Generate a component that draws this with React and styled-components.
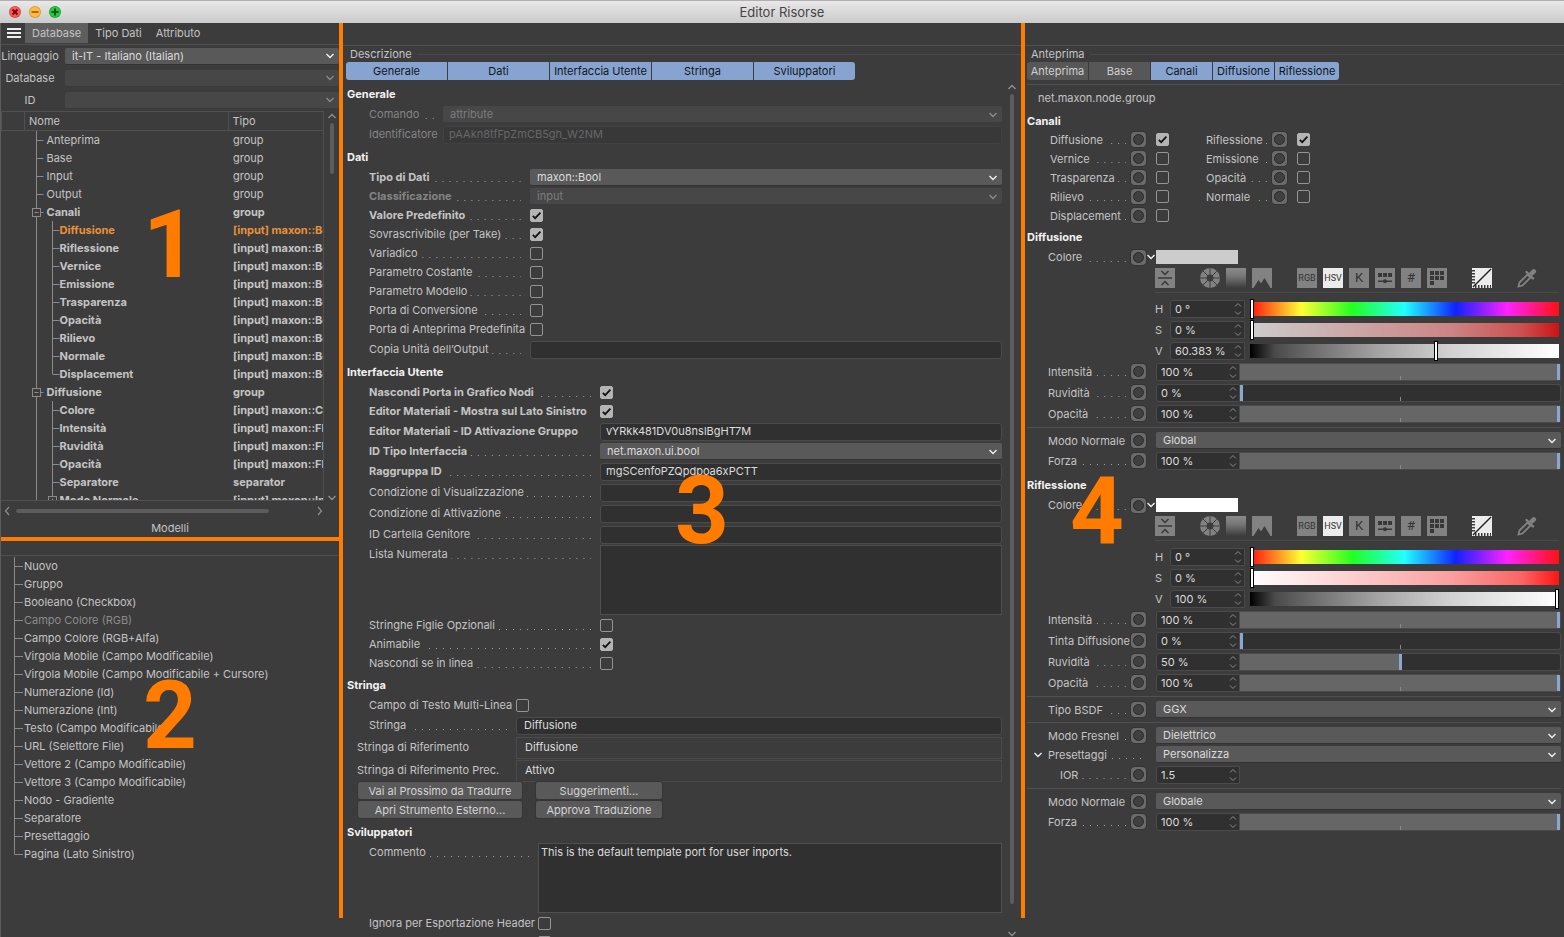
import React, { useId } from 'react'
import styled, { createGlobalStyle } from 'styled-components'

const orange = '#ff7c00'
const line = '#505050'

const GlobalStyle = createGlobalStyle`
  * {
    box-sizing: border-box;
  }
  body {
    margin: 0;
    background: #3c3c3c;
    color: #c4c4c4;
    font: 11px/14px Inter, 'Liberation Sans', sans-serif;
  }
  button, input, select, textarea {
    margin: 0;
    padding: 0;
    border: 0;
    color: inherit;
    font: inherit;
  }
`

const Window = styled.div`
  display: flex;
  flex-direction: column;
  height: 100vh;
  overflow: hidden;
`

const TitleBar = styled.header`
  display: grid;
  grid-template-columns: 1fr auto 1fr;
  align-items: center;
  height: 23px;
  flex: none;
  padding: 0 9px;
  border-top: 1px solid #b4aeb2;
  background: linear-gradient(#e8e8e8, #cbcbcb);
  color: #444;
`

const WindowTitle = styled.h1`
  margin: 0;
  font-size: 13px;
  line-height: 20px;
  font-weight: 400;
`

const Lights = styled.div`
  display: flex;
  gap: 8px;
`

const Light = styled.button`
  display: block;
  width: 12px;
  height: 12px;
  border-radius: 50%;
  background: ${(p) => p.$color};
  box-shadow: inset 0 0 0 1px rgba(0, 0, 0, 0.15);

  svg {
    display: block;
  }
`

const Columns = styled.main`
  display: grid;
  grid-template-columns: minmax(0, 343fr) minmax(0, 682fr) minmax(0, 539fr);
  flex: 1;
  min-height: 0;
`

const Panel = styled.section`
  position: relative;
  display: flex;
  flex-direction: column;
  min-width: 0;
  min-height: 0;
  overflow: hidden;
`

const SidePanel = styled(Panel)`
  border-left: 1px solid #5c5c5c;
  padding-right: 4px;
`

// annotation marks laid over the editor
const Divider = styled.div`
  position: absolute;
  top: 0;
  right: 0;
  bottom: 19px;
  width: 4px;
  background: ${orange};
`

const Marker = styled.div`
  position: absolute;
  left: ${(p) => p.$x}px;
  top: ${(p) => p.$y}px;
  color: ${orange};
  font: bold 94px/72px Roboto, Arial, sans-serif;
  pointer-events: none;
`

const MenuBar = styled.nav`
  display: flex;
  align-items: stretch;
  flex: none;
  height: 22px;
  padding: 0 0 1px 4px;
  border-bottom: 1px solid ${line};
`

const MenuItem = styled.button`
  padding: 0 7px;
  background: ${(p) => (p.$active ? '#5e5e5e' : 'transparent')};
`

const Burger = styled.button`
  width: 20px;
  background: none;

  svg {
    display: block;
  }
`

const Overlap = styled.div`
  display: grid;
  flex: 1;
  align-items: center;
  min-width: 0;

  > * {
    grid-area: 1 / 1;
  }
  > svg {
    justify-self: end;
    margin-right: 4px;
    pointer-events: none;
  }
`

const SelectBox = styled.select`
  width: 100%;
  height: 17px;
  padding-left: 7px;
  appearance: none;
  border-bottom: 1px solid #333;
  border-radius: 2px;
  background: #595959;
  color: #dcdcdc;
  opacity: 1;

  &:disabled {
    border-color: #3c3c3c;
    background: #474747;
    color: #7c7c7c;
  }
`

const Chevron = ({ color = '#f0f0f0', up }) => (
  <svg width="10" height="6" viewBox="0 0 10 6" fill="none" stroke={color} strokeWidth="1.4">
    <path d={up ? 'M1.5 5 5 1.5 8.5 5' : 'M1.5 1 5 4.5 8.5 1'} />
  </svg>
)

const Select = ({ id, value, disabled, label }) => (
  <Overlap>
    <SelectBox id={id} disabled={disabled} aria-label={label}>
      <option>{value}</option>
    </SelectBox>
    <Chevron color={disabled ? '#8a8a8a' : '#f0f0f0'} />
  </Overlap>
)

const TextBox = styled.input`
  flex: 1;
  min-width: 0;
  height: 18px;
  padding: 0 0 1px ${(p) => p.$pad || 5}px;
  border: 1px solid #4b4b4b;
  border-radius: 3px;
  background: #303030;
  color: #dcdcdc;

  &:disabled {
    border-color: #414141;
    background: #383838;
    color: #676767;
  }
`

const ReadOnly = styled(TextBox)`
  height: 22px;
  border-radius: 0;
  background: transparent;
`

const Area = styled.textarea`
  flex: 1;
  height: 70px;
  padding: 1px 2px;
  border: 1px solid #4f4f4f;
  background: #303030;
  color: #dcdcdc;
  resize: none;
`

const tick = `url("data:image/svg+xml,%3Csvg xmlns='http://www.w3.org/2000/svg' viewBox='0 0 13 13'%3E%3Cpath d='M2.8 6.8 5.2 9.2 10.4 3.6' fill='none' stroke='%23111' stroke-width='1.7'/%3E%3C/svg%3E")`

const Check = styled.input.attrs({ type: 'checkbox' })`
  flex: none;
  width: 13px;
  height: 13px;
  appearance: none;
  border: 1px solid #949494;
  border-radius: 2px;

  &:checked {
    border-color: #b4b4b4;
    background: #b4b4b4 ${tick} center / 13px 13px;
  }
`

const PushButton = styled.button`
  height: 17px;
  border-radius: 2px;
  background: #595959;
  box-shadow: 0 0 0 1px #353535;
  color: #d4d4d4;
`

/* left panel */

const FilterRow = styled.div`
  display: flex;
  align-items: center;
  flex: none;
  height: 22px;
`

const FilterLabel = styled.label`
  width: 58px;
  margin-right: 6px;
  text-align: center;
`

const TreeFrame = styled.div`
  display: flex;
  flex: none;
  height: 390px;
`

const TreeClip = styled.div`
  flex: 1;
  min-width: 0;
  overflow: hidden;
  border: solid ${line};
  border-width: 1px 1px 1px 0;
`

const TreeTable = styled.table`
  width: 100%;
  table-layout: fixed;
  border-collapse: collapse;

  th {
    height: 18px;
    padding: 0 0 0 4px;
    border-bottom: 1px solid ${line};
    border-left: 1px solid ${line};
    font-weight: 400;
    text-align: left;
  }
  td {
    height: 18px;
    padding: 0;
    overflow: hidden;
    white-space: nowrap;
  }
  td:last-child {
    padding-left: 5px;
  }
`

const TreeRow = styled.tr`
  font-weight: ${(p) => (p.$bold ? 700 : 400)};
  color: ${(p) => (p.$active ? '#e8913a' : 'inherit')};
`

const NodeName = styled.div`
  display: flex;
  align-items: center;
  height: 18px;

  svg {
    flex: none;
  }
`

const ScrollColumn = styled.div`
  display: flex;
  flex-direction: column;
  align-items: center;
  justify-content: space-between;
  flex: none;
  gap: 4px;
  width: ${(p) => p.$width}px;
  padding-top: ${(p) => p.$pad}px;
`

const ScrollRow = styled.div`
  display: flex;
  align-items: center;
  flex: none;
  gap: 6px;
  height: 18px;
  padding: 2px 16px 0 3px;
`

const Thumb = styled.div`
  width: 4px;
  height: ${(p) => p.$size};
  margin-bottom: auto;
  border-radius: 2px;
  background: #5c5c5c;
`

const HorizontalThumb = styled.div`
  flex: 1;
  height: 4px;
  margin-right: 42px;
  border-radius: 2px;
  background: #5c5c5c;
`

const ModelsTitle = styled.h2`
  margin: 0;
  padding: 1px 0;
  font-size: 11px;
  line-height: 16px;
  font-weight: 400;
  text-align: center;
`

const HorizontalDivider = styled.div`
  flex: none;
  height: 4px;
  background: ${orange};
`

const ModelList = styled.ul`
  flex: 1;
  margin: 14px 0 0;
  padding: 1px 0 0 11px;
  border-top: 1px solid ${line};
  list-style: none;
`

const ModelItem = styled.li`
  display: flex;
  align-items: center;
  height: 18px;
  color: ${(p) => (p.$dim ? '#8b8b8b' : 'inherit')};
`

/* middle and right panels */

const EmptyBar = styled.div`
  flex: none;
  height: 23px;
  border-bottom: 1px solid ${line};
`

const GroupTitle = styled.div`
  display: flex;
  align-items: center;
  flex: none;
  gap: 5px;
  height: 16px;
  padding-left: ${(p) => p.$indent}px;

  &::after {
    content: '';
    flex: 1;
    height: 1px;
    background: #4a4a4a;
  }
`

const Tabs = styled.div`
  display: flex;
  flex: none;
  gap: 1px;
  height: 18px;
  padding-left: ${(p) => p.$indent}px;
`

const Tab = styled.button`
  width: ${(p) => p.$width}px;
  background: ${(p) => (p.$on ? '#86a4cf' : '#575757')};
  color: ${(p) => (p.$on ? '#10141c' : '#cfcfcf')};
  white-space: nowrap;

  &:first-child {
    border-radius: 3px 0 0 3px;
  }
  &:last-child {
    border-radius: 0 3px 3px 0;
  }
`

const ScrollArea = styled.div`
  display: flex;
  flex: 1;
  min-height: 0;
  padding: 0 4px;
`

const Form = styled.form`
  flex: 1;
  min-width: 0;
  padding-top: 4px;
`

const SectionTitle = styled.h2`
  margin: 0;
  color: #f2f2f2;
  font-size: 11px;
  line-height: 21px;
  font-weight: 700;
`

const Section = styled.div`
  margin-bottom: 2px;
`

const heights = { check: 19, select: 19, input: 21, area: 71, read: 23 }

const FieldRow = styled.div`
  display: flex;
  align-items: ${(p) => (p.$kind === 'area' ? 'flex-start' : 'center')};
  height: ${(p) => heights[p.$kind]}px;
`

const FieldLabel = styled.label`
  display: flex;
  align-items: center;
  flex: none;
  width: ${(p) => p.$width}px;
  padding-left: ${(p) => p.$indent}px;
  line-height: 19px;
  color: ${(p) => (p.$dim ? '#848484' : 'inherit')};
  font-weight: ${(p) => (p.$bold ? 700 : 400)};
  white-space: nowrap;
`

const Leader = styled.span`
  flex: 1;
  height: 1px;
  margin: 8px 9px 0 3px;
  background: linear-gradient(270deg, #a2a2a2 1px, transparent 1px) right / 7px 1px repeat-x;
`

const ButtonGrid = styled.div`
  display: grid;
  grid-template-columns: 164px 126px;
  grid-auto-rows: 17px;
  gap: 2px 14px;
  margin-left: 11px;
  padding-bottom: 2px;
`

const Field = ({ kind, label, value, on, bold, dim, width, indent = 22, dots = true, pad }) => {
  const id = useId()
  return (
    <FieldRow $kind={kind}>
      <FieldLabel htmlFor={id} $width={width} $indent={indent} $bold={bold} $dim={dim}>
        {label}
        {dots && <Leader />}
      </FieldLabel>
      {kind === 'check' && <Check id={id} defaultChecked={on} />}
      {kind === 'select' && <Select id={id} value={value} disabled={dim} />}
      {kind === 'input' && <TextBox id={id} defaultValue={value} disabled={dim} $pad={pad} />}
      {kind === 'read' && <ReadOnly id={id} value={value} readOnly $pad={8} />}
      {kind === 'area' && <Area id={id} defaultValue={value} />}
    </FieldRow>
  )
}

const description = [
  {
    title: 'Generale',
    width: 96,
    fields: [
      { kind: 'select', label: 'Comando', value: 'attribute', dim: true },
      { kind: 'input', label: 'Identificatore', value: 'pAAkn8tfFpZmCB5gh_W2NM', dim: true, dots: false },
    ],
  },
  {
    title: 'Dati',
    width: 183,
    fields: [
      { kind: 'select', label: 'Tipo di Dati', value: 'maxon::Bool', bold: true },
      { kind: 'select', label: 'Classificazione', value: 'input', bold: true, dim: true },
      { kind: 'check', label: 'Valore Predefinito', on: true, bold: true },
      { kind: 'check', label: 'Sovrascrivibile (per Take)', on: true },
      { kind: 'check', label: 'Variadico' },
      { kind: 'check', label: 'Parametro Costante' },
      { kind: 'check', label: 'Parametro Modello' },
      { kind: 'check', label: 'Porta di Conversione' },
      { kind: 'check', label: 'Porta di Anteprima Predefinita', dots: false },
      { kind: 'input', label: 'Copia Unità dell’Output', value: '' },
    ],
  },
  {
    title: 'Interfaccia Utente',
    width: 253,
    fields: [
      { kind: 'check', label: 'Nascondi Porta in Grafico Nodi', on: true, bold: true },
      { kind: 'check', label: 'Editor Materiali - Mostra sul Lato Sinistro', on: true, bold: true, dots: false },
      { kind: 'input', label: 'Editor Materiali - ID Attivazione Gruppo', value: 'vYRkk481DV0u8nslBgHT7M', bold: true, dots: false },
      { kind: 'select', label: 'ID Tipo Interfaccia', value: 'net.maxon.ui.bool', bold: true },
      { kind: 'input', label: 'Raggruppa ID', value: 'mgSCenfoPZQpdpoa6xPCTT', bold: true },
      { kind: 'input', label: 'Condizione di Visualizzazione', value: '' },
      { kind: 'input', label: 'Condizione di Attivazione', value: '' },
      { kind: 'input', label: 'ID Cartella Genitore', value: '' },
      { kind: 'area', label: 'Lista Numerata', value: '' },
      { kind: 'check', label: 'Stringhe Figlie Opzionali' },
      { kind: 'check', label: 'Animabile', on: true },
      { kind: 'check', label: 'Nascondi se in linea' },
    ],
  },
  {
    title: 'Stringa',
    width: 169,
    fields: [
      { kind: 'check', label: 'Campo di Testo Multi-Linea', dots: false },
      { kind: 'input', label: 'Stringa', value: 'Diffusione', pad: 7 },
      { kind: 'read', label: 'Stringa di Riferimento', value: 'Diffusione', indent: 10, dots: false },
      { kind: 'read', label: 'Stringa di Riferimento Prec.', value: 'Attivo', indent: 10, dots: false },
    ],
    buttons: ['Vai al Prossimo da Tradurre', 'Suggerimenti...', 'Apri Strumento Esterno...', 'Approva Traduzione'],
  },
  {
    title: 'Sviluppatori',
    width: 191,
    fields: [
      { kind: 'area', label: 'Commento', value: 'This is the default template port for user inports.' },
      { kind: 'check', label: 'Ignora per Esportazione Header', dots: false },
      { kind: 'check', label: '' },
    ],
  },
]

const child = (name, type) => ({ name, type: `[input] maxon::${type}`, level: 2, bold: true })

const tree = [
  { name: 'Anteprima', type: 'group', level: 1 },
  { name: 'Base', type: 'group', level: 1 },
  { name: 'Input', type: 'group', level: 1 },
  { name: 'Output', type: 'group', level: 1 },
  { name: 'Canali', type: 'group', level: 1, bold: true, box: '-' },
  { ...child('Diffusione', 'Bool'), active: true },
  child('Riflessione', 'Bool'),
  child('Vernice', 'Bool'),
  child('Emissione', 'Bool'),
  child('Trasparenza', 'Bool'),
  child('Opacità', 'Bool'),
  child('Rilievo', 'Bool'),
  child('Normale', 'Bool'),
  { ...child('Displacement', 'Bool'), last: true },
  { name: 'Diffusione', type: 'group', level: 1, bold: true, box: '-' },
  child('Colore', 'Color'),
  child('Intensità', 'Float'),
  child('Ruvidità', 'Float'),
  child('Opacità', 'Float'),
  { name: 'Separatore', type: 'separator', level: 2, bold: true },
  { ...child('Modo Normale', 'Int'), box: '+' },
]

const models = [
  'Nuovo',
  'Gruppo',
  'Booleano (Checkbox)',
  'Campo Colore (RGB)',
  'Campo Colore (RGB+Alfa)',
  'Virgola Mobile (Campo Modificabile)',
  'Virgola Mobile (Campo Modificabile + Cursore)',
  'Numerazione (Id)',
  'Numerazione (Int)',
  'Testo (Campo Modificabile)',
  'URL (Selettore File)',
  'Vettore 2 (Campo Modificabile)',
  'Vettore 3 (Campo Modificabile)',
  'Nodo - Gradiente',
  'Separatore',
  'Presettaggio',
  'Pagina (Lato Sinistro)',
]

const Guides = ({ level, box, last }) => {
  const x = level === 1 ? 11.5 : 27.5
  const width = level === 1 ? 22 : 35
  return (
    <svg width={width} height="18" fill="none" stroke="#8a8a8a">
      <path d="M11.5 0V18" />
      {level === 2 && <path d={last ? 'M27.5 0V9' : 'M27.5 0V18'} />}
      <path d={`M${x} 9.5H${x + 7}`} />
      {box && (
        <>
          <rect x={x - 4} y="5.5" width="8" height="8" fill="#3c3c3c" />
          <path d={`M${x - 2} 9.5h4`} />
          {box === '+' && <path d={`M${x} 7.5v4`} />}
        </>
      )}
    </svg>
  )
}

const Filter = ({ label, value, disabled }) => {
  const id = useId()
  return (
    <FilterRow>
      <FilterLabel htmlFor={id}>{label}</FilterLabel>
      <Select id={id} value={value} disabled={disabled} />
    </FilterRow>
  )
}

const Side = ({ left }) => (
  <svg width="6" height="10" viewBox="0 0 6 10" fill="none" stroke="#8f8f8f" strokeWidth="1.2">
    <path d={left ? 'M5 1 1.5 5 5 9' : 'M1 1 4.5 5 1 9'} />
  </svg>
)

const DatabasePanel = () => (
  <SidePanel>
    <MenuBar>
      <Burger aria-label="Menu">
        <svg width="20" height="11" fill="#f0f0f0">
          <path d="M2 0h14v2H2zM2 4h14v2H2zM2 8h14v2H2z" />
        </svg>
      </Burger>
      <MenuItem $active>Database</MenuItem>
      <MenuItem>Tipo Dati</MenuItem>
      <MenuItem>Attributo</MenuItem>
    </MenuBar>
    <Filter label="Linguaggio" value="it-IT - Italiano (Italian)" />
    <Filter label="Database" value="" disabled />
    <Filter label="ID" value="" disabled />
    <TreeFrame>
      <TreeClip>
        <TreeTable>
          <colgroup>
            <col style={{ width: 23 }} />
            <col />
            <col style={{ width: 95 }} />
          </colgroup>
          <thead>
            <tr>
              <th aria-label="Stato" />
              <th>Nome</th>
              <th>Tipo</th>
            </tr>
          </thead>
          <tbody>
            {tree.map((node, i) => (
              <TreeRow key={i} $bold={node.bold} $active={node.active}>
                <td />
                <td>
                  <NodeName>
                    <Guides {...node} />
                    {node.name}
                  </NodeName>
                </td>
                <td>{node.type}</td>
              </TreeRow>
            ))}
          </tbody>
        </TreeTable>
      </TreeClip>
      <ScrollColumn $width={15} $pad={2}>
        <Chevron color="#8f8f8f" up />
        <Thumb $size="51px" />
        <Chevron color="#8f8f8f" />
      </ScrollColumn>
    </TreeFrame>
    <ScrollRow>
      <Side left />
      <HorizontalThumb />
      <Side />
    </ScrollRow>
    <ModelsTitle>Modelli</ModelsTitle>
    <HorizontalDivider />
    <ModelList>
      {models.map((name, i) => (
        <ModelItem key={name} $dim={i === 3}>
          <svg width="12" height="18" fill="none" stroke="#8a8a8a">
            <path d={i === models.length - 1 ? 'M2.5 0V9.5H11' : 'M2.5 0V18M2.5 9.5H11'} />
          </svg>
          {name}
        </ModelItem>
      ))}
    </ModelList>
    <Marker $x={142} $y={186}>1</Marker>
    <Marker $x={142} $y={657}>2</Marker>
    <Divider />
  </SidePanel>
)

const DescriptionPanel = () => (
  <Panel>
    <EmptyBar />
    <GroupTitle $indent={7}>Descrizione</GroupTitle>
    <Tabs $indent={3}>
      {['Generale', 'Dati', 'Interfaccia Utente', 'Stringa', 'Sviluppatori'].map((name) => (
        <Tab key={name} $on $width={101}>{name}</Tab>
      ))}
    </Tabs>
    <ScrollArea>
      <Form>
        {description.map(({ title, width, fields, buttons }) => (
          <Section key={title}>
            <SectionTitle>{title}</SectionTitle>
            {fields.map((field) => (
              <Field key={field.label} width={width} {...field} />
            ))}
            {buttons && (
              <ButtonGrid>
                {buttons.map((name) => (
                  <PushButton key={name} type="button">{name}</PushButton>
                ))}
              </ButtonGrid>
            )}
          </Section>
        ))}
      </Form>
      <ScrollColumn $width={19} $pad={4}>
        <Chevron color="#8f8f8f" up />
        <Thumb $size="95%" />
        <Chevron color="#8f8f8f" />
      </ScrollColumn>
    </ScrollArea>
    <Marker $x={332} $y={452}>3</Marker>
    <Divider />
  </Panel>
)

const Attributes = styled.form`
  padding: 0 3px 0 2px;
`

const NodeId = styled.p`
  margin: 4px 0 0;
  padding: 5px 0 6px 11px;
  border-top: 1px solid ${line};
  line-height: 16px;
`

const AttributeTitle = styled(SectionTitle)`
  margin-top: ${(p) => p.$gap || 0}px;
  line-height: 18px;
`

const ChannelGrid = styled.div`
  display: grid;
  grid-template-columns: 119px 104px;
  grid-auto-rows: 19px;
  column-gap: 37px;
  margin-left: 23px;
`

const Channel = styled.div`
  display: flex;
  align-items: center;
`

const ChannelLabel = styled.label`
  display: flex;
  align-items: center;
  flex: 1;
  white-space: nowrap;
`

const attributeHeights = { colour: 22, slider: 21, number: 21, select: 19 }

const AttributeRow = styled.div`
  display: grid;
  grid-template-columns: 21px 83px 15px 10px minmax(0, 1fr);
  align-items: center;
  height: ${(p) => attributeHeights[p.$kind]}px;
`

const AttributeLabel = styled.label`
  display: flex;
  align-items: center;
  grid-column: ${(p) => (p.$wide ? '2 / 4' : '2')};
  padding-left: ${(p) => (p.$nested ? 12 : 0)}px;
  white-space: nowrap;
`

const ShortLeader = styled(Leader)`
  margin: 8px 5px 0 3px;
`

const Caret = styled.button`
  justify-self: center;
  background: none;

  svg {
    display: block;
  }
`

const Rule = styled.hr`
  height: 1px;
  margin: 3px 0;
  border: 0;
  background: ${line};
`

const Swatch = styled.input.attrs({ type: 'color' })`
  display: block;
  width: 82px;
  height: 14px;
  appearance: none;
  background: none;

  &::-webkit-color-swatch-wrapper {
    padding: 0;
  }
  &::-webkit-color-swatch {
    border: 0;
    border-radius: 0;
  }
`

const NumberBox = styled.div`
  display: flex;
  align-items: center;
  flex: none;
  width: ${(p) => p.$width}px;
  height: 18px;
  padding: 0 2px 0 4px;
  border: 1px solid #4b4b4b;
  border-radius: 3px 0 0 3px;
  background: #303030;
  color: #dcdcdc;

  input {
    flex: 1;
    min-width: 0;
    background: none;
  }
`

const SliderLine = styled.div`
  display: flex;
`

const Slider = styled.input.attrs({ type: 'range' })`
  flex: 1;
  min-width: 0;
  height: 18px;
  appearance: none;
  border: 1px solid #4b4b4b;
  border-left: 0;
  border-radius: 0 3px 3px 0;
  background:
    linear-gradient(#8a8a8a, #8a8a8a) center bottom / 1px 4px no-repeat,
    linear-gradient(90deg, #666 ${(p) => p.defaultValue}%, #303030 ${(p) => p.defaultValue}%);

  &::-webkit-slider-thumb {
    width: 3px;
    height: 16px;
    appearance: none;
    background: #8ba7d1;
  }
`

const hue = '#f11, #ff3 16.6%, #2f2 33.3%, #2ff 50%, #12f 66.6%, #f2f 83.3%, #f11'
const value = '#000, #4a4a4a 8%, #6d6d6d 20%, #a5a5a5 42%, #d2d2d2 65%, #fff'

const ColourBar = styled.input.attrs({ type: 'range' })`
  flex: 1;
  min-width: 0;
  height: 14px;
  margin: 0 2px 0 5px;
  appearance: none;
  background: linear-gradient(90deg, ${(p) => p.$stops});

  &::-webkit-slider-thumb {
    width: 4px;
    height: 20px;
    appearance: none;
    border: 1px solid #000;
    background: #fff;
  }
`

const ColourRow = styled.div`
  display: flex;
  align-items: center;
  height: 21px;
  margin-left: 128px;

  label {
    width: 15px;
  }
`

const IconBar = styled.div`
  display: flex;
  height: 25px;
  margin: 0 2px 5px 128px;
  border-bottom: 1px solid #4a4a4a;
`

const IconGroup = styled.div`
  display: flex;
  gap: 6px;
  margin-right: 25px;
`

const IconButton = styled.button`
  display: grid;
  place-items: center;
  flex: none;
  width: 20px;
  height: 20px;
  background: ${(p) => (p.$bare ? 'none' : p.$on ? '#ececec' : '#828282')};
  color: ${(p) => (p.$bare ? '#828282' : '#333')};
  font: ${(p) => (p.$word ? 9 : 13)}px/20px Roboto, 'Liberation Sans', sans-serif;

  svg {
    display: block;
  }
`

const Socket = styled.button`
  display: grid;
  place-items: center;
  flex: none;
  width: 15px;
  height: 15px;
  border-radius: 4px;
  background: #6a6a6a;
  box-shadow: 0 0 0 1px #343434;

  &::after {
    content: '';
    width: 9px;
    height: 9px;
    border: 1px solid #2a2a2a;
    border-radius: 50%;
    background: #404040;
  }
`

const ChannelSocket = styled(Socket)`
  margin-right: 10px;
`

const Spinner = () => (
  <svg width="8" height="14" viewBox="0 0 8 14" fill="none" stroke="#8a8a8a">
    <path d="M1 4.5 4 1.5 7 4.5M1 9.5 4 12.5 7 9.5" />
  </svg>
)

const NumberField = ({ id, text, width }) => (
  <NumberBox $width={width}>
    <input id={id} defaultValue={text} />
    <Spinner />
  </NumberBox>
)

const Attribute = ({ kind, label, text, amount, nested, open, colour }) => {
  const id = useId()
  return (
    <AttributeRow $kind={kind}>
      {open ? <Caret type="button" aria-label="Apri"><Chevron /></Caret> : <span />}
      <AttributeLabel htmlFor={id} $nested={nested} $wide={open}>
        {label}
        <ShortLeader />
      </AttributeLabel>
      {!open && <Socket type="button" aria-label={`Porta ${label}`} />}
      {kind === 'colour' ? <Caret type="button" aria-label="Espandi"><Chevron /></Caret> : <span />}
      {kind === 'colour' && <Swatch id={id} defaultValue={colour} />}
      {kind === 'select' && <Select id={id} value={text} />}
      {kind === 'number' && <NumberField id={id} text={text} width={84} />}
      {kind === 'slider' && (
        <SliderLine>
          <NumberField id={id} text={text} width={84} />
          <Slider aria-label={label} defaultValue={amount} />
        </SliderLine>
      )}
    </AttributeRow>
  )
}

const ColourTools = () => (
  <IconBar>
    <IconGroup>
      <IconButton type="button" aria-label="Comprimi">
        <svg width="20" height="20" fill="none" stroke="#383838" strokeWidth="1.5">
          <path d="M3 10H17M6.5 3 10 6.5 13.5 3M6.5 17 10 13.5 13.5 17" />
        </svg>
      </IconButton>
    </IconGroup>
    <IconGroup>
      <IconButton type="button" aria-label="Ruota colore" $bare>
        <svg width="20" height="20">
          <circle cx="10" cy="10" r="10" fill="#828282" />
          <path d="M10 0V20M0 10H20M3 3 17 17M17 3 3 17" stroke="#3c3c3c" strokeWidth="1" />
          <circle cx="10" cy="10" r="3.4" fill="#3c3c3c" />
        </svg>
      </IconButton>
      <IconButton type="button" aria-label="Spettro" $bare>
        <svg width="20" height="20">
          <defs>
            <linearGradient id="spectrum" x2="0" y2="1">
              <stop stopColor="#8a8a8a" />
              <stop offset="0.4" stopColor="#777" />
              <stop offset="1" stopColor="#3c3c3c" />
            </linearGradient>
          </defs>
          <path d="M0 0H20V20H0z" fill="url(#spectrum)" />
        </svg>
      </IconButton>
      <IconButton type="button" aria-label="Immagine" $bare>
        <svg width="20" height="20">
          <path d="M0 0H20V20H18L12.500 10 9 15.500 6.500 12 1.500 20H0z" fill="#828282" />
          <path d="M2.500 20 6.500 13.500 10.500 20z" fill="#3c3c3c" />
          <path d="M9.500 16 12.500 11 18.500 20H12z" fill="#3c3c3c" />
        </svg>
      </IconButton>
    </IconGroup>
    <IconGroup>
      <IconButton type="button" $word>RGB</IconButton>
      <IconButton type="button" $word $on>HSV</IconButton>
      <IconButton type="button">K</IconButton>
      <IconButton type="button" aria-label="Mixer">
        <svg width="20" height="20" fill="#383838">
          <path d="M3 5h4v4H3zM8 5h4v4H8zM13 5h4v4h-4zM3 12.500h14v1.500H3z" />
          <circle cx="10" cy="13.200" r="2" />
        </svg>
      </IconButton>
      <IconButton type="button">#</IconButton>
      <IconButton type="button" aria-label="Campioni">
        <svg width="20" height="20" fill="#383838">
          <path d="M3 3h4v4H3zM8 3h4v4H8zM13 3h4v4h-4zM3 8h4v4H3zM8 8h4v4H8zM13 8h4v4h-4zM3 13h4v4H3z" />
        </svg>
      </IconButton>
    </IconGroup>
    <IconGroup>
      <IconButton type="button" aria-label="Curva" $bare>
        <svg width="20" height="20">
          <path d="M0 0H20V20H0z" fill="#ececec" />
          <path d="M1 19 19 1" stroke="#222" strokeWidth="1.4" />
          <path d="M1.500 2V17" stroke="#3c3c3c" strokeWidth="3" strokeDasharray="1.500 1.500" />
          <path d="M3 18.500H19" stroke="#3c3c3c" strokeWidth="3" strokeDasharray="1.500 1.500" />
        </svg>
      </IconButton>
    </IconGroup>
    <IconButton type="button" aria-label="Contagocce" $bare>
      <svg width="20" height="20">
        <path d="M1.500 18.500 2.500 14.500 10.500 6.500 13.500 9.500 5.500 17.500z" fill="none" stroke="#828282" strokeWidth="1.8" />
        <path d="M9.500 4 16 10.500" stroke="#828282" strokeWidth="2.400" strokeLinecap="round" />
        <path d="M12 5 15.500 1.500Q17 .500 18.500 2T18.500 5L15 8z" fill="#828282" />
      </svg>
    </IconButton>
  </IconBar>
)

const ColourField = ({ name, text, amount, stops }) => {
  const id = useId()
  return (
    <ColourRow>
      <label htmlFor={id}>{name}</label>
      <NumberField id={id} text={text} width={75} />
      <ColourBar aria-label={name} min="0" max="100" step="any" defaultValue={amount} $stops={stops} />
    </ColourRow>
  )
}

const channels = [
  ['Diffusione', true],
  ['Riflessione', true],
  ['Vernice'],
  ['Emissione'],
  ['Trasparenza'],
  ['Opacità'],
  ['Rilievo'],
  ['Normale'],
  ['Displacement'],
]

const ChannelField = ({ name, on }) => {
  const id = useId()
  return (
    <Channel>
      <ChannelLabel htmlFor={id}>
        {name}
        <ShortLeader />
      </ChannelLabel>
      <ChannelSocket type="button" aria-label={`Porta ${name}`} />
      <Check id={id} defaultChecked={on} />
    </Channel>
  )
}

const PreviewPanel = () => (
  <Panel>
    <EmptyBar />
    <GroupTitle $indent={6}>Anteprima</GroupTitle>
    <Tabs $indent={2}>
      <Tab $width={61}>Anteprima</Tab>
      <Tab $width={61}>Base</Tab>
      <Tab $on $width={61}>Canali</Tab>
      <Tab $on $width={61}>Diffusione</Tab>
      <Tab $on $width={64}>Riflessione</Tab>
    </Tabs>
    <Attributes>
      <NodeId>net.maxon.node.group</NodeId>
      <AttributeTitle>Canali</AttributeTitle>
      <ChannelGrid>
        {channels.map(([name, on]) => (
          <ChannelField key={name} name={name} on={on} />
        ))}
      </ChannelGrid>

      <AttributeTitle $gap={3}>Diffusione</AttributeTitle>
      <Attribute kind="colour" label="Colore" colour="#cccccc" />
      <ColourTools />
      <ColourField name="H" text="0 °" amount={0} stops={hue} />
      <ColourField name="S" text="0 %" amount={0} stops="#ccc, #cc8484 65%, #cc5050 88%, #cc1414" />
      <ColourField name="V" text="60.383 %" amount={60.383} stops={value} />
      <Attribute kind="slider" label="Intensità" text="100 %" amount={100} />
      <Attribute kind="slider" label="Ruvidità" text="0 %" amount={0} />
      <Attribute kind="slider" label="Opacità" text="100 %" amount={100} />
      <Rule />
      <Attribute kind="select" label="Modo Normale" text="Global" />
      <Attribute kind="slider" label="Forza" text="100 %" amount={100} />

      <AttributeTitle $gap={5}>Riflessione</AttributeTitle>
      <Attribute kind="colour" label="Colore" colour="#ffffff" />
      <ColourTools />
      <ColourField name="H" text="0 °" amount={0} stops={hue} />
      <ColourField name="S" text="0 %" amount={0} stops="#fff, #fa9f9f 65%, #fb6464 88%, #ff1414" />
      <ColourField name="V" text="100 %" amount={100} stops={value} />
      <Attribute kind="slider" label="Intensità" text="100 %" amount={100} />
      <Attribute kind="slider" label="Tinta Diffusione" text="0 %" amount={0} />
      <Attribute kind="slider" label="Ruvidità" text="50 %" amount={50} />
      <Attribute kind="slider" label="Opacità" text="100 %" amount={100} />
      <Rule />
      <Attribute kind="select" label="Tipo BSDF" text="GGX" />
      <Rule />
      <Attribute kind="select" label="Modo Fresnel" text="Dielettrico" />
      <Attribute kind="select" label="Presettaggi" text="Personalizza" open />
      <Attribute kind="number" label="IOR" text="1.5" nested />
      <Rule />
      <Attribute kind="select" label="Modo Normale" text="Globale" />
      <Attribute kind="slider" label="Forza" text="100 %" amount={100} />
    </Attributes>
    <Marker $x={45} $y={453}>4</Marker>
  </Panel>
)

export default () => (
  <Window>
    <GlobalStyle />
    <TitleBar>
      <Lights>
        <Light $color="#fc5b57" aria-label="Chiudi">
          <svg width="12" height="12" stroke="#7a0c0c" strokeWidth="2"><path d="M3.500 3.500 8.500 8.500M8.500 3.500 3.500 8.500" /></svg>
        </Light>
        <Light $color="#fdbc40" aria-label="Riduci">
          <svg width="12" height="12" stroke="#8f5a08" strokeWidth="1.6"><path d="M2.500 6H9.500" /></svg>
        </Light>
        <Light $color="#29c840" aria-label="Ingrandisci">
          <svg width="12" height="12" stroke="#065c10" strokeWidth="2"><path d="M2.500 6H9.500M6 2.500V9.500" /></svg>
        </Light>
      </Lights>
      <WindowTitle>Editor Risorse</WindowTitle>
    </TitleBar>
    <Columns>
      <DatabasePanel />
      <DescriptionPanel />
      <PreviewPanel />
    </Columns>
  </Window>
)
